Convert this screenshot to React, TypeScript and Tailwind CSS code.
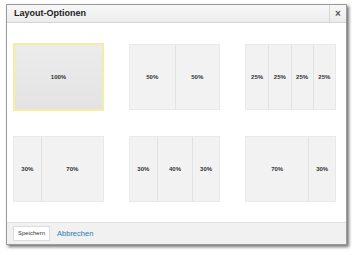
import React from "react";

type Tile = { cols: number[]; selected?: boolean };

const rows: Tile[][] = [
  [{ cols: [100], selected: true }, { cols: [50, 50] }, { cols: [25, 25, 25, 25] }],
  [{ cols: [30, 70] }, { cols: [30, 40, 30] }, { cols: [70, 30] }],
];

function LayoutTile({ tile }: { tile: Tile }) {
  if (tile.selected) {
    return (
      <div className="w-[91px] h-[68px] border-2 border-[#f4eda8] bg-[linear-gradient(to_bottom,#ececec,#e3e3e3)] flex items-center justify-center">
        <span className="text-[6px] font-bold text-[#333]">100%</span>
      </div>
    );
  }
  return (
    <div className="w-[91px] h-[66px] border border-[#e9e9e9] bg-[#f2f2f2] flex">
      {tile.cols.map((c, i) => (
        <div
          key={i}
          style={{ width: `${c}%` }}
          className={`flex items-center justify-center ${i > 0 ? "border-l border-[#e2e2e2]" : ""}`}
        >
          <span className="text-[6px] font-bold text-[#333]">{c}%</span>
        </div>
      ))}
    </div>
  );
}

export default function App() {
  return (
    <div className="w-[356px] h-[255px] bg-white" style={{ fontFamily: '"Liberation Sans", Arial, sans-serif' }}>
      <div className="absolute left-[6px] top-[4px] w-[341px] h-[241px] border border-[#9a9a9a] bg-white shadow-[2px_2px_3px_rgba(0,0,0,0.55)] flex flex-col">
        <div className="h-[18px] flex items-stretch border-b border-[#d4d4d4] bg-gradient-to-b from-[#f7f7f7] to-[#ececec]">
          <div className="flex-1 flex items-center pl-[7px] text-[9px] font-bold text-[#222]">Layout-Optionen</div>
          <div className="w-[17px] border-l border-[#d8d8d8] flex items-center justify-center text-[10px] text-[#555] font-bold leading-none">×</div>
        </div>
        <div className="flex-1 flex flex-col pl-[6px] pt-[20px] gap-[25px]">
          {rows.map((row, ri) => (
            <div key={ri} className="flex gap-[25px] items-start">
              {row.map((t, ti) => (
                <div key={ti} className={ri === 0 && ti > 0 ? "mt-[1px]" : ""}>
                  <LayoutTile tile={t} />
                </div>
              ))}
            </div>
          ))}
        </div>
        <div className="h-[22px] border-t border-[#e0e0e0] bg-[#f1f1f1] flex items-center pl-[6px] gap-[7px]">
          <div className="h-[15px] px-[4px] border border-[#dcdcdc] bg-white flex items-center text-[6px] text-[#333]">Speichern</div>
          <div className="text-[7.5px] text-[#2a7ab0]">Abbrechen</div>
        </div>
      </div>
    </div>
  );
}
